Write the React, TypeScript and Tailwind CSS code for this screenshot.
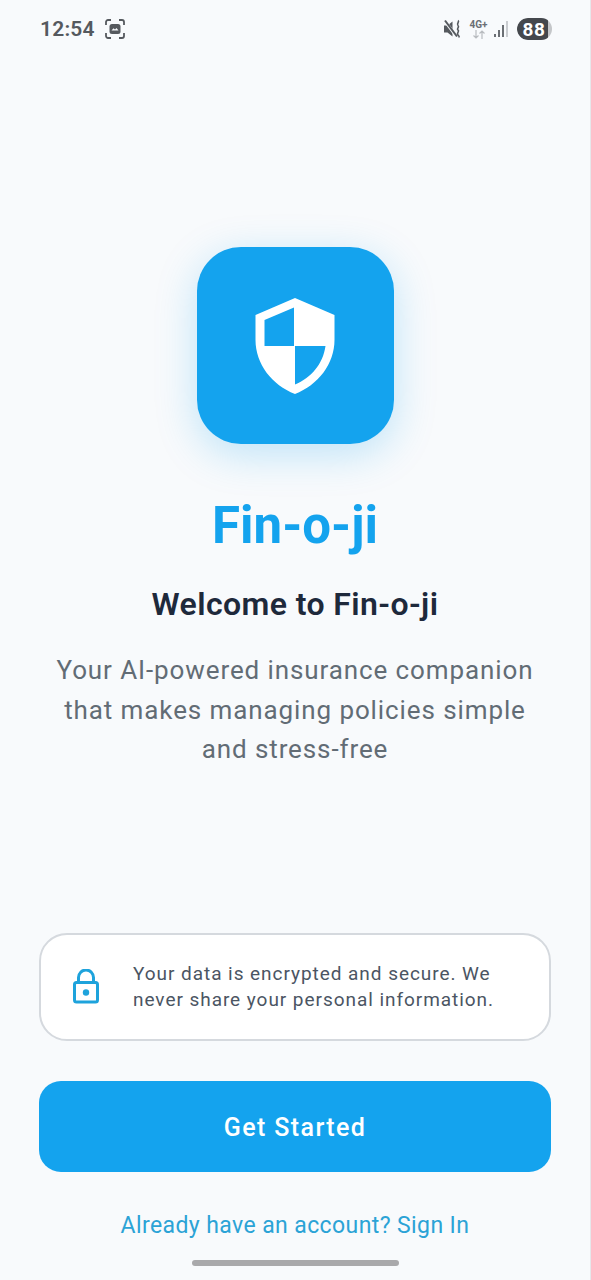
function ScreenshotIcon() {
    return (
        <svg width="20" height="20" viewBox="0 0 20 20" fill="none" className="ml-[10px]">
            <path d="M1 6V3a2 2 0 0 1 2-2H6M14 1h3a2 2 0 0 1 2 2V6M19 14v3a2 2 0 0 1-2 2H14M6 19H3a2 2 0 0 1-2-2V14" stroke="#55595e" strokeWidth="1.800" />
            <rect x="4.500" y="5" width="11" height="10" rx="2.500" fill="#55595e" />
            <path d="M6.500 11.500l2-2.200 1.500 1.200 1.500-1.500 2 2.500z" fill="#f8fafc" />
        </svg>
    );
}

function MuteIcon() {
    return (
        <svg width="18" height="20" viewBox="0 0 18 20" fill="none">
            <path d="M0 6.500h3.500L8.500 2.500v15l-5-4H0z" fill="#55595e" />
            <path d="M0.500 1.500l12 16" stroke="#f8fafc" strokeWidth="3" />
            <path d="M1 1.500l12 16" stroke="#55595e" strokeWidth="2" />
            <path d="M14 1.500c2 1.500-2 3 0 5s-2 3 0 4.500-2 3 0 5 1 1.500 1 2.500" stroke="#55595e" strokeWidth="1.600" />
        </svg>
    );
}

function NetworkIcon() {
    return (
        <div className="flex w-[17px] flex-col items-center leading-none">
            <span className="text-[10px] font-bold leading-[10px] text-[#6b6f74]">4G+</span>
            <svg width="14" height="9" viewBox="0 0 14 9" fill="none">
                <path d="M4 0v8M1.500 5.500L4 8l2.500-2.500M10 9V1M7.500 3.500L10 1l2.500 2.500" stroke="#b9bcc0" strokeWidth="1.200" />
            </svg>
        </div>
    );
}

function SignalIcon() {
    return (
        <svg width="14" height="18" viewBox="0 0 14 18" className="ml-[7px]">
            <rect x="0" y="14" width="2" height="3" fill="#6b6f74" />
            <rect x="4" y="10" width="2" height="7" fill="#6b6f74" />
            <rect x="8" y="5" width="2" height="12" fill="#6b6f74" />
            <rect x="12" y="1" width="2" height="16" fill="#c9ccd0" />
        </svg>
    );
}

function ShieldIcon() {
    return (
        <svg width="80" height="96" viewBox="0 0 80 96" className="block">
            <path
                fillRule="evenodd"
                fill="#ffffff"
                d="M40 0L79.500 17V42C79.500 66 63 87 40 96C17 87 0.500 66 0.500 42V17ZM39 9.500L9.500 22V48H39ZM40 48V86.500C56 80 68 66 70.500 48Z"
            />
        </svg>
    );
}

function LockIcon() {
    return (
        <svg width="26" height="35" viewBox="0 0 26 35" fill="none" className="shrink-0">
            <path d="M5.500 13V8.500a7.500 7.500 0 0 1 15 0V13" stroke="#1ea3dc" strokeWidth="3" />
            <rect x="1.500" y="13.500" width="23" height="19.500" rx="2" stroke="#1ea3dc" strokeWidth="3" />
            <circle cx="13" cy="23.500" r="3.200" fill="#1ea3dc" />
        </svg>
    );
}

export default function App() {
    return (
        <div className="flex h-[1280px] w-[591px] flex-col items-center border-r border-[#e6e8eb] bg-[#f8fafc] font-['Roboto',sans-serif]">
            {/* status bar */}
            <div className="flex h-[58px] w-full items-center justify-between pl-[40px] pr-[38px]">
                <div className="flex items-center">
                    <span className="text-[21px] font-semibold leading-none tracking-[0.2px] text-[#55595e]">12:54</span>
                    <ScreenshotIcon />
                </div>
                <div className="flex items-center">
                    <MuteIcon />
                    <div className="ml-[8px]">
                        <NetworkIcon />
                    </div>
                    <SignalIcon />
                    <div className="ml-[9px] flex h-[22px] w-[35px] items-center overflow-hidden rounded-[11px] bg-[#c4c6c9]">
                        <div className="flex h-full w-[31px] items-center justify-center rounded-l-[11px] bg-[#45484d] pl-[3px]">
                            <span className="text-[19px] font-bold leading-none tracking-[0.5px] text-white">88</span>
                        </div>
                    </div>
                </div>
            </div>

            {/* logo */}
            <div className="mt-[189px] flex h-[197px] w-[197px] items-center justify-center rounded-[44px] bg-[#14a3ee] shadow-[0_10px_40px_rgba(20,163,238,0.25)]">
                <ShieldIcon />
            </div>

            <h1 className="mt-[47px] text-[51px] font-bold leading-[70px] text-[#14a3ee]">Fin-o-ji</h1>
            <h2 className="mt-[22px] text-[32px] font-semibold leading-[42px] tracking-[0.4px] text-[#1e293b]">Welcome to Fin-o-ji</h2>
            <p className="mt-[26px] w-[490px] text-center text-[26px] leading-[39.500px] tracking-[0.9px] text-[#626c75]">
                Your AI-powered insurance companion that makes managing policies simple and stress-free
            </p>

            {/* secure note */}
            <div className="mt-[163px] flex h-[108px] w-[512px] items-center rounded-[28px] border-2 border-[#d5d9de] bg-white pl-[32px]">
                <LockIcon />
                <p className="ml-[34px] text-[19px] leading-[26px] tracking-[0.95px] text-[#4b5563]">
                    Your data is encrypted and secure. We
                    <br />
                    never share your personal information.
                </p>
            </div>

            <button className="mt-[40px] flex h-[91px] w-[512px] items-center justify-center rounded-[22px] bg-[#14a3ee] pt-[3px] text-[25px] font-medium tracking-[1.400px] text-white">
                Get Started
            </button>

            <a className="mt-[38px] text-[23px] leading-[32px] tracking-[0.4px] text-[#2ba3d6]">Already have an account? Sign In</a>

            <div className="mt-[18px] h-[6px] w-[207px] rounded-full bg-[#a9a9ab]" />
        </div>
    );
}
